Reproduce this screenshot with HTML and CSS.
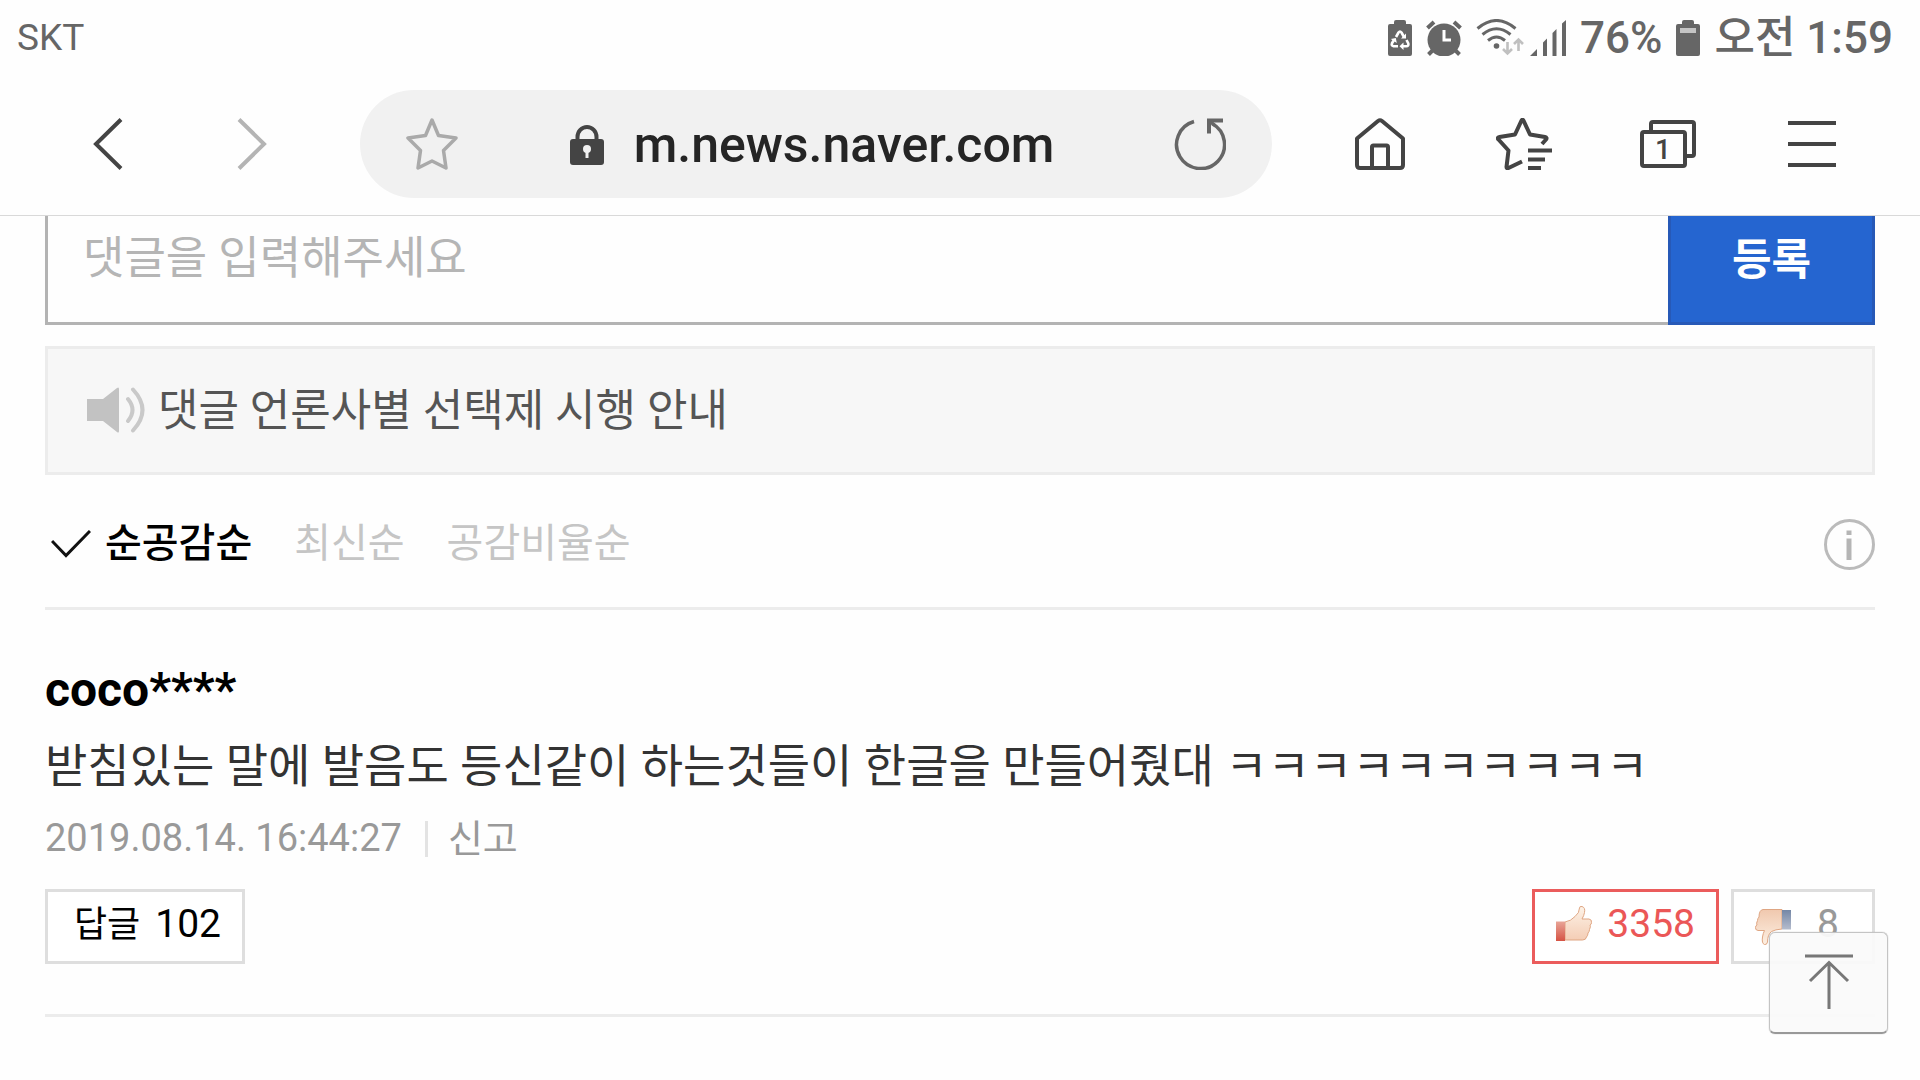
FILE: index.html
```html
<!DOCTYPE html>
<html lang="ko">
<head>
  <meta charset="UTF-8">
  <meta name="viewport" content="width=device-width, initial-scale=1.0">
  <title>네이버 뉴스 댓글</title>
  <link rel="stylesheet" href="styles.css">
</head>
<body>
  <!-- 상태 표시줄 -->
  <div class="status-bar">
    <span class="carrier">SKT</span>
    <div class="status-right">
      <svg class="ico-recycle" width="24" height="36" viewBox="0 0 24 36">
        <path fill="#666" d="M8 0h8a2 2 0 0 1 2 2v2h4a2 2 0 0 1 2 2v28a2 2 0 0 1-2 2H2a2 2 0 0 1-2-2V6a2 2 0 0 1 2-2h4V2a2 2 0 0 1 2-2z"/>
        <g fill="none" stroke="#fff" stroke-width="2.6">
          <path d="M8 17l2.500-4.500q1.500-2 3 0L16 17"/>
          <path d="M18.500 20l1.800 3.500q.6 2.500-2 2.700h-4.500"/>
          <path d="M10 26.200H5.500q-2.500-.5-1.500-3l2-3.200"/>
        </g>
        <path fill="#fff" d="M18 13.500v5h-5zM15.500 22.500v7.500l-4-3.800zM2.800 19l5-1 1 5z"/>
      </svg>
      <svg class="ico-alarm" width="36" height="36" viewBox="0 0 36 36">
        <circle cx="18" cy="20" r="16.500" fill="#666"/>
        <path d="M1.500 8l6.500-6M34.500 8L28 2" stroke="#666" stroke-width="4"/>
        <path d="M7 30l-4.500 4.500M29 30l4.500 4.500" stroke="#666" stroke-width="4"/>
        <path d="M18 10v10h7" fill="none" stroke="#fff" stroke-width="3"/>
      </svg>
      <svg class="ico-wifi" width="48" height="38" viewBox="0 0 48 38">
        <g fill="none" stroke="#666" stroke-width="3">
          <path d="M1.500 9.500q19-16 38 0"/>
          <path d="M6.500 15.500q14-11.500 28 0"/>
          <path d="M12 21.500q8.500-7 17 0"/>
        </g>
        <circle cx="20.500" cy="27" r="2.800" fill="#666"/>
        <path d="M31.500 23v11M27 30l4.500 4.500L36 30M42.500 32V21M38 25l4.500-4.500L47 25" fill="none" stroke="#c0c0c0" stroke-width="2.600"/>
      </svg>
      <svg class="ico-signal" width="36" height="36" viewBox="0 0 36 36">
        <path fill="#666" d="M0 36l7-7v7zM13 22.500l4-4V36h-4zM22.500 13l4-4v27h-4zM32 3.500l4-3.500v36h-4z"/>
      </svg>
      <span class="percent">76%</span>
      <svg class="ico-battery" width="24" height="36" viewBox="0 0 24 36">
        <path fill="#666" d="M8 0h8a2 2 0 0 1 2 2v2h4a2 2 0 0 1 2 2v28a2 2 0 0 1-2 2H2a2 2 0 0 1-2-2V6a2 2 0 0 1 2-2h4V2a2 2 0 0 1 2-2z"/>
        <path fill="#c4c4c4" d="M4 8h16v5H4z"/>
      </svg>
      <span class="clock">오전 1:59</span>
    </div>
  </div>

  <!-- 브라우저 주소창 -->
  <header class="toolbar">
    <button class="tool-btn" type="button" aria-label="뒤로">
      <svg width="30" height="52" viewBox="0 0 30 52"><path d="M28 1.500L3 26l25 24.500" fill="none" stroke="#444" stroke-width="4"/></svg>
    </button>
    <button class="tool-btn" type="button" aria-label="앞으로">
      <svg width="30" height="52" viewBox="0 0 30 52"><path d="M2 1.500L27 26 2 50.500" fill="none" stroke="#b4b4b4" stroke-width="4"/></svg>
    </button>
    <div class="address">
      <button class="addr-btn" type="button" aria-label="즐겨찾기 추가">
        <svg width="52" height="52" viewBox="0 0 52 52"><path d="M26 2l6.500 15.500L50 20 37.500 32.500 40 50 26 43 12 50l2.500-17.500L2 20l17.500-2.500z" fill="none" stroke="#aaa" stroke-width="3.500" stroke-linejoin="round"/></svg>
      </button>
      <a class="url" href="#">
        <svg width="34" height="40" viewBox="0 0 34 40">
          <path d="M7.500 16v-4a9.500 10 0 0 1 19 0v4" fill="none" stroke="#444" stroke-width="4"/>
          <rect y="14" width="34" height="26" rx="3" fill="#444"/>
          <ellipse cx="17" cy="24" rx="4" ry="4" fill="#f1f1f1"/>
          <path d="M15.500 26h3v7h-3z" fill="#f1f1f1"/>
        </svg>
        m.news.naver.com
      </a>
      <button class="addr-btn" type="button" aria-label="새로고침">
        <svg width="52" height="52" viewBox="0 0 52 52">
          <path d="M20 3.500A24 24 0 1 0 38 5.500" fill="none" stroke="#666" stroke-width="3.500"/>
          <path d="M35 15.500V2.500h14" fill="none" stroke="#666" stroke-width="4"/>
          <path d="M36 3.500l5 4" stroke="#666" stroke-width="3"/>
        </svg>
      </button>
    </div>
    <button class="tool-btn" type="button" aria-label="홈">
      <svg width="52" height="52" viewBox="0 0 52 52"><path d="M3 20.500L24 3q2-1.500 4 0l21 17.500V47q0 3-3 3H6q-3 0-3-3zM18 50V29q0-1.500 1.500-1.500h13Q34 27.500 34 29v21" fill="none" stroke="#444" stroke-width="4" stroke-linejoin="round"/></svg>
    </button>
    <button class="tool-btn" type="button" aria-label="북마크">
      <svg width="56" height="52" viewBox="0 0 56 52">
        <path d="M46 26l4-4.500q1.500-2-1-2.500l-15-2.500L27.500 2.500q-1-1.500-2 0L19 16.500 3.500 19q-3 .5-1 2.500l10 11L10.500 49q0 2 2 1L26 43.500" fill="none" stroke="#444" stroke-width="4" stroke-linejoin="round"/>
        <path d="M32 32.500h24M32 41.500h17M32 50h13" stroke="#444" stroke-width="4"/>
      </svg>
    </button>
    <button class="tool-btn" type="button" aria-label="탭">
      <svg width="56" height="48" viewBox="0 0 56 48">
        <path d="M11 10V4q0-2 2-2h39q2 0 2 2v30q0 2-2 2h-7" fill="none" stroke="#444" stroke-width="4"/>
        <rect x="2" y="12" width="43" height="34" rx="2" fill="none" stroke="#444" stroke-width="4"/>
        <text class="tab-count" x="23" y="39" text-anchor="middle">1</text>
      </svg>
    </button>
    <button class="tool-btn" type="button" aria-label="메뉴">
      <svg width="48" height="46" viewBox="0 0 48 46"><path d="M0 2h48M0 23h48M0 44h48" stroke="#444" stroke-width="4"/></svg>
    </button>
  </header>

  <main class="comments">
    <!-- 댓글 입력 -->
    <form class="write">
      <textarea class="write-box" aria-label="댓글 입력" placeholder="댓글을 입력해주세요"></textarea>
      <button class="write-submit" type="button">등록</button>
    </form>

    <a class="notice" href="#">
      <svg width="59" height="46" viewBox="0 0 59 46">
        <path d="M0 12h16L30 1q2-1.500 2 1v42q0 2.500-2 1L16 34H0z" fill="#c2c2c2"/>
        <path d="M41 12q9 11 0 22M46 2.500q19 20.500 0 41" fill="none" stroke="#c9c9c9" stroke-width="4" stroke-linecap="round"/>
      </svg>
      <span>댓글 언론사별 선택제 시행 안내</span>
    </a>

    <!-- 정렬 -->
    <div class="sort">
      <button class="sort-btn active" type="button">
        <svg width="40" height="28" viewBox="0 0 40 28"><path d="M1 11l14 14.500L39 1" fill="none" stroke="#111" stroke-width="3"/></svg>
        <span>순공감순</span>
      </button>
      <button class="sort-btn" type="button"><span>최신순</span></button>
      <button class="sort-btn" type="button"><span>공감비율순</span></button>
      <button class="info-btn" type="button" aria-label="안내">
        <svg width="51" height="51" viewBox="0 0 51 51"><circle cx="25.500" cy="25.500" r="24" fill="none" stroke="#bbb" stroke-width="3"/><path d="M22.500 11.500h5V16h-5zM22.500 19.500h5V41h-5z" fill="#b5b5b5"/></svg>
      </button>
    </div>

    <!-- 댓글 -->
    <article class="comment">
      <h2 class="nick">coco****</h2>
      <p class="text">받침있는 말에 발음도 등신같이 하는것들이 한글을 만들어줬대 ㅋㅋㅋㅋㅋㅋㅋㅋㅋㅋ</p>
      <div class="meta">
        <time datetime="2019-08-14T16:44:27">2019.08.14. 16:44:27</time>
        <a class="report" href="#">신고</a>
      </div>
      <div class="actions">
        <button class="box-btn reply" type="button"><span class="reply-label">답글</span> <span>102</span></button>
        <button class="box-btn like" type="button" aria-label="공감 3358">
          <svg width="36" height="36" viewBox="0 0 36 36">
            <defs>
              <linearGradient id="skin" x1="0" y1="0" x2="0" y2="1"><stop offset="0" stop-color="#fdf3e8"/><stop offset="1" stop-color="#f4cdb5"/></linearGradient>
              <linearGradient id="cuff-red" x1="0" y1="0" x2="0" y2="1"><stop offset="0" stop-color="#e8a597"/><stop offset="1" stop-color="#d65344"/></linearGradient>
            </defs>
            <path d="M9 16q6-1 10-5.500 4.500-3.500 4.500-8.500 0-2 2.500-1.500 3.500 1 2.500 6-.5 3-2.500 6.500h7q3 .5 2.500 3.500 0 2-1.500 2.500 1 1.500-.5 4.500 0 2-1.500 3.500 0 2.500-1.500 4-.5 3-4 3H9z" fill="url(#skin)" stroke="#dfa683"/>
            <path d="M0 15.500h9V35H0z" fill="url(#cuff-red)"/>
          </svg>
          3358
        </button>
        <button class="box-btn dislike" type="button" aria-label="비공감 8">
          <svg width="36" height="36" viewBox="0 0 36 36">
            <defs>
              <linearGradient id="cuff-blue" x1="0" y1="0" x2="0" y2="1"><stop offset="0" stop-color="#7487a6"/><stop offset="1" stop-color="#b5bccd"/></linearGradient>
              <linearGradient id="skin-down" x1="0" y1="0" x2="0" y2="1"><stop offset="0" stop-color="#f0c8ae"/><stop offset="1" stop-color="#fdf0e3"/></linearGradient>
            </defs>
            <path d="M27 20q-7 .5-10.500 2.500-4 3-4 10.500-.5 3-3 2.500-3-1-2-7.500.5-3.500 2-6.500H3Q0 21 .5 18.500q0-2 1.500-2.500-1-1.500.5-4.500 0-2 1.500-3.500Q4 1 8 .5h19z" fill="url(#skin-down)" stroke="#dfa683"/>
            <path d="M27 1h9v19.500h-9z" fill="url(#cuff-blue)"/>
          </svg>
          8
        </button>
      </div>
    </article>
  </main>

  <!-- 맨 위로 -->
  <button class="to-top" type="button" aria-label="맨 위로">
    <svg width="50" height="56" viewBox="0 0 50 56"><path d="M1 2h48M25 8v47M6 27L25 8.500 44 27" fill="none" stroke="#777" stroke-width="3"/></svg>
  </button>
</body>
</html>
```
FILE: styles.css
```css
* {
  box-sizing: border-box;
}

body {
  margin: 0;
  background: #fefefe;
  color: #000;
  font-family: Roboto, "Noto Sans CJK KR", sans-serif;
}

button,
textarea {
  font-family: inherit;
  background: none;
  border: 0;
  border-radius: 0;
  margin: 0;
  padding: 0;
}

button {
  cursor: pointer;
}

a {
  color: inherit;
  text-decoration: none;
}

svg {
  display: block;
  flex: none;
}

/* 상태 표시줄 */
.status-bar {
  display: flex;
  justify-content: space-between;
  align-items: center;
  height: 75px;
  padding: 0 27px 0 17px;
  color: #666;
}

.carrier {
  font-size: 37px;
}

.status-right {
  display: flex;
  align-items: center;
  gap: 14px;
  font-size: 44px;
  font-weight: 500;
  line-height: 76px;
}

.ico-signal {
  margin-left: -8px;
}

/* 주소창 */
.toolbar {
  display: flex;
  align-items: center;
  padding: 15px 36px 17px;
  border-bottom: 1px solid #d9d9d9;
}

.tool-btn {
  display: flex;
  justify-content: center;
  align-items: center;
  width: 144px;
  height: 108px;
}

.tab-count {
  font-size: 28px;
  font-weight: 500;
  fill: #444;
}

.address {
  display: flex;
  flex: 1;
  justify-content: space-between;
  align-items: center;
  height: 108px;
  margin: 0 36px;
  padding: 0 46px;
  border-radius: 54px;
  background: #f1f1f1;
}

.url {
  display: flex;
  align-items: center;
  gap: 30px;
  padding: 2px 8px 0 0;
  color: #252525;
  font-size: 50px;
  font-weight: 500;
}

/* 댓글 영역 */
.comments {
  padding: 0 45px;
}

.write {
  display: flex;
  height: 109px;
}

.write-box {
  flex: 1;
  padding: 11px 35px 0;
  border: 3px solid #b3b3b3;
  border-width: 0 0 3px 3px;
  font-size: 45px;
  line-height: 64px;
  resize: none;
  outline: 0;
  overflow: hidden;
}

.write-box::placeholder {
  color: #b5b5b5;
}

.write-submit {
  width: 207px;
  padding-bottom: 26px;
  border: 3px solid #2759b7;
  border-top: 0;
  background: #2565d0;
  color: #fff;
  font-size: 43px;
  font-weight: 700;
}

.notice {
  display: flex;
  align-items: center;
  gap: 12px;
  height: 129px;
  margin-top: 21px;
  padding: 0 39px 2px;
  border: 3px solid #ececec;
  background: #f7f7f7;
  color: #555;
  font-size: 44px;
}

.notice span,
.sort-btn span,
.reply-label {
  padding-bottom: 5px;
}

/* 정렬 */
.sort {
  display: flex;
  align-items: center;
  gap: 42px;
  height: 135px;
  padding-top: 6px;
  border-bottom: 3px solid #ececec;
}

.sort-btn {
  display: flex;
  align-items: center;
  gap: 14px;
  color: #c5c5c5;
  font-size: 40px;
}

.sort-btn span {
  padding-bottom: 9px;
}

.sort-btn.active {
  padding-left: 6px;
  color: #000;
  font-weight: 500;
}

.info-btn {
  margin-left: auto;
}

/* 댓글 하나 */
.comment {
  padding: 50px 0;
  border-bottom: 3px solid #ececec;
}

.nick {
  margin: 0;
  font-size: 48px;
  font-weight: 700;
  line-height: 60px;
}

.text {
  margin: 8px 0 0;
  color: #333;
  font-size: 46px;
  line-height: 76px;
}

.meta {
  display: flex;
  align-items: center;
  height: 60px;
  margin-top: 5px;
  color: #999;
  font-size: 38px;
}

.meta time {
  padding-bottom: 3px;
}

.report {
  margin-left: 23px;
  padding-left: 20px;
  border-left: 3px solid #e3e3e3;
  line-height: 36px;
}

.actions {
  display: flex;
  gap: 12px;
  margin-top: 20px;
}

.box-btn {
  display: flex;
  align-items: center;
  justify-content: space-between;
  height: 75px;
  padding: 0 21px 6px;
  border: 3px solid #dedede;
  background: #fff;
  font-size: 39px;
}

.reply {
  gap: 15px;
  margin-right: auto;
  padding-left: 26px;
  color: #000;
}

.reply-label {
  font-size: 36px;
}

.like {
  gap: 15px;
  border-color: #eb5c5c;
  color: #eb5757;
}

.dislike {
  width: 144px;
  padding-right: 33px;
  color: #999;
}

.dislike svg {
  margin-top: 6px;
}

/* 맨 위로 버튼 */
.to-top {
  position: fixed;
  right: 32px;
  bottom: 46px;
  display: flex;
  justify-content: center;
  align-items: center;
  width: 119px;
  height: 102px;
  padding-bottom: 2px;
  border: 1px solid #c4c4c4;
  border-bottom: 2px solid #999;
  border-radius: 6px;
  background: rgba(250, 250, 250, 0.94);
  box-shadow: 0 0 1px #999;
}
```
